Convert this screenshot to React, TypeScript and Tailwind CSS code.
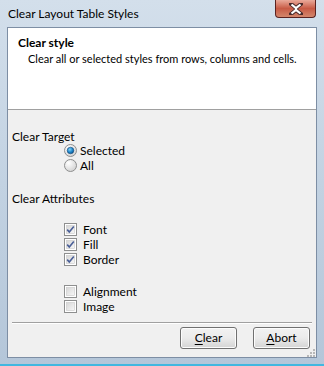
import React from 'react';

const font = { fontFamily: 'Lato, "Liberation Sans", sans-serif' };

function Radio({ checked, label }: { checked?: boolean; label: string }) {
  return (
    <div className="flex items-center h-[15px]">
      <svg width="13" height="13" viewBox="0 0 13 13" className="shrink-0">
        <defs>
          <radialGradient id={checked ? 'rg1' : 'rg0'} cx="0.35" cy="0.3" r="0.8">
            <stop offset="0" stopColor="#ffffff" />
            <stop offset="1" stopColor="#cfcfcf" />
          </radialGradient>
          <radialGradient id="dot" cx="0.4" cy="0.35" r="0.7">
            <stop offset="0" stopColor="#7fd3f7" />
            <stop offset="0.6" stopColor="#1b82c8" />
            <stop offset="1" stopColor="#0b4f85" />
          </radialGradient>
        </defs>
        <circle cx="6.5" cy="6.5" r="6" fill={`url(#${checked ? 'rg1' : 'rg0'})`} stroke="#8e8f8f" />
        {checked && <circle cx="6.5" cy="6.5" r="3.3" fill="url(#dot)" stroke="#15497a" strokeWidth="0.6" />}
      </svg>
      <span className="ml-[3px] text-[12px] leading-[15px] text-black whitespace-nowrap">{label}</span>
    </div>
  );
}

function Check({ checked, label }: { checked?: boolean; label: string }) {
  return (
    <div className="flex items-center h-[15px]">
      <svg width="13" height="13" viewBox="0 0 13 13" className="shrink-0">
        <defs>
          <linearGradient id="cb" x1="0" y1="0" x2="1" y2="1">
            <stop offset="0" stopColor="#d6d6d6" />
            <stop offset="1" stopColor="#f7f7f7" />
          </linearGradient>
        </defs>
        <rect x="0.5" y="0.5" width="12" height="12" fill="#fff" stroke="#8e8f8f" />
        <rect x="2.5" y="2.5" width="8" height="8" fill="url(#cb)" stroke="#c9c9c9" strokeWidth="0.6" />
        {checked && (
          <path d="M3.2 6.6 L5.3 9 L9.8 3.4" fill="none" stroke="#4a5f97" strokeWidth="1.6" />
        )}
      </svg>
      <span className="ml-[6px] text-[12px] leading-[15px] text-black whitespace-nowrap">{label}</span>
    </div>
  );
}

function Btn({ u, rest }: { u: string; rest: string }) {
  return (
    <button className="w-[57px] h-[22px] rounded-[3px] border border-[#707070] bg-gradient-to-b from-[#f2f2f2] via-[#ebebeb] to-[#d4d4d4] text-[12px] text-black leading-none shadow-[inset_0_0_0_1px_#fcfcfc]">
      <span className="underline underline-offset-2">{u}</span>
      {rest}
    </button>
  );
}

export default function App() {
  return (
    <div
      className="w-[324px] h-[366px] flex flex-col bg-gradient-to-b from-[#d3dfeb] via-[#c2d2e2] to-[#b4c6d9] overflow-hidden"
      style={font}
    >
      <div className="h-[27px] flex items-start justify-between pl-[8px] pr-[8px] shrink-0">
        <span className="mt-[5px] text-[12px] text-black whitespace-nowrap">Clear Layout Table Styles</span>
        <div className="w-[41px] h-[18px] rounded-b-[4px] border border-t-0 border-[#5a2220] bg-gradient-to-b from-[#e9a99a] via-[#c75a45] to-[#d3866c] flex items-center justify-center">
          <svg width="14" height="12" viewBox="0 0 14 12">
            <path d="M2 1 L7 5 L12 1 M2 11 L7 7 L12 11" fill="none" stroke="#4a2a2a" strokeWidth="4" strokeLinecap="square" />
            <path d="M2.5 1.5 L7 5.2 L11.5 1.5 M2.5 10.5 L7 6.8 L11.5 10.5 M7 5 L7 7" fill="none" stroke="#ffffff" strokeWidth="2.2" />
          </svg>
        </div>
      </div>
      <div className="mx-[7px] h-[331px] border border-[#7d8ea4] bg-[#f0f0f0] flex flex-col">
        <div className="h-[82px] bg-white border-b border-[#a0a0a0] pt-[7px] pl-[10px] shrink-0">
          <div className="text-[12px] font-bold text-black leading-[15px]">Clear style</div>
          <div className="text-[11px] text-black leading-[15px] pl-[10px] mt-[1px] whitespace-nowrap">
            Clear all or selected styles from rows, columns and cells.
          </div>
        </div>
        <div className="flex-1 flex flex-col pl-[4px]">
          <div className="mt-[19px] text-[12px] text-black leading-[15px]">Clear Target</div>
          <div className="ml-[52px] -mt-[1px] flex flex-col">
            <Radio checked label="Selected" />
            <Radio label="All" />
          </div>
          <div className="mt-[18px] text-[12px] text-black leading-[15px]">Clear Attributes</div>
          <div className="ml-[52px] mt-[16px] flex flex-col">
            <Check checked label="Font" />
            <Check checked label="Fill" />
            <Check checked label="Border" />
            <div className="h-[17px]" />
            <Check label="Alignment" />
            <Check label="Image" />
          </div>
          <div className="mt-[8px] mr-[4px] border-t border-[#a0a0a0] border-b-white border-b" />
          <div className="flex justify-end gap-[16px] pr-[6px] mt-[3px]">
            <Btn u="C" rest="lear" />
            <Btn u="A" rest="bort" />
          </div>
          <div className="flex-1 flex items-end justify-end pr-[1px] pb-[1px]">
            <svg width="8" height="8" viewBox="0 0 8 8">
              {[
                [6, 0], [6, 3], [3, 3], [6, 6], [3, 6], [0, 6],
              ].map(([x, y], i) => (
                <rect key={i} x={x} y={y} width="2" height="2" fill="#b8b8b8" />
              ))}
            </svg>
          </div>
        </div>
      </div>
      <div className="flex-1" />
      <div className="h-[2px] bg-[#41b7e0]" />
    </div>
  );
}
